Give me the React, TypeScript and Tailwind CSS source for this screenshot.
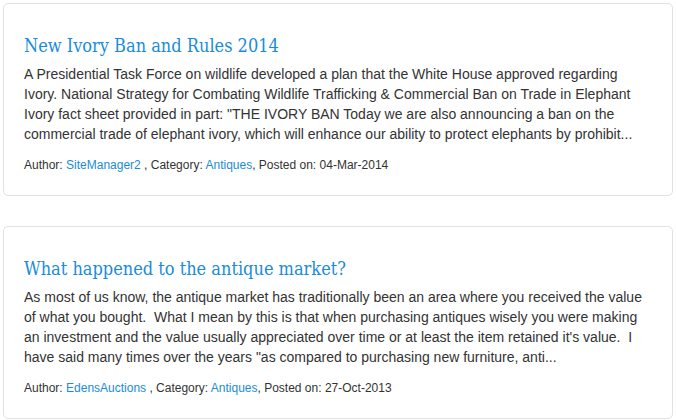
const POSTS = [
  {
    title: "New Ivory Ban and Rules 2014",
    body: [
      "A Presidential Task Force on wildlife developed a plan that the White House approved regarding",
      "Ivory. National Strategy for Combating Wildlife Trafficking & Commercial Ban on Trade in Elephant",
      "Ivory fact sheet provided in part: \"THE IVORY BAN Today we are also announcing a ban on the",
      "commercial trade of elephant ivory, which will enhance our ability to protect elephants by prohibit...",
    ],
    author: "SiteManager2",
    category: "Antiques",
    date: "04-Mar-2014",
  },
  {
    title: "What happened to the antique market?",
    body: [
      "As most of us know, the antique market has traditionally been an area where you received the value",
      "of what you bought.\u00a0 What I mean by this is that when purchasing antiques wisely you were making",
      "an investment and the value usually appreciated over time or at least the item retained it's value.\u00a0 I",
      "have said many times over the years \"as compared to purchasing new furniture, anti...",
    ],
    author: "EdensAuctions",
    category: "Antiques",
    date: "27-Oct-2013",
  },
];

function PostCard({ post }: { post: (typeof POSTS)[number] }) {
  return (
    <div className="rounded-[5px] border border-[#e2e2e2] bg-white px-5 pt-[30px] pb-[22px]">
      <h2 className="font-['DejaVu_Serif_Condensed','DejaVu_Serif',serif] text-[18px] leading-[24px] text-[#1a8cd8]">
        {post.title}
      </h2>
      <p className="mt-[6px] font-['Liberation_Sans',Arial,sans-serif] text-[14px] leading-[20px] text-[#333]">
        {post.body.map((line, i) => (
          // biome-ignore lint/suspicious/noArrayIndexKey: static lines
          <span key={i} className="block whitespace-pre">
            {line}
          </span>
        ))}
      </p>
      <p className="mt-[13px] font-['Liberation_Sans',Arial,sans-serif] text-[12px] leading-[16px] text-[#333]">
        Author: <span className="text-[#1a8cd8]">{post.author}</span> , Category:{" "}
        <span className="text-[#1a8cd8]">{post.category}</span>, Posted on: {post.date}
      </p>
    </div>
  );
}

export default function App() {
  return (
    <div className="h-[420px] w-[676px] overflow-hidden bg-white pl-[3px] pr-[3px] pt-[3px]">
      <div className="flex flex-col gap-[30px]">
        {POSTS.map((p) => (
          <PostCard key={p.title} post={p} />
        ))}
      </div>
    </div>
  );
}
